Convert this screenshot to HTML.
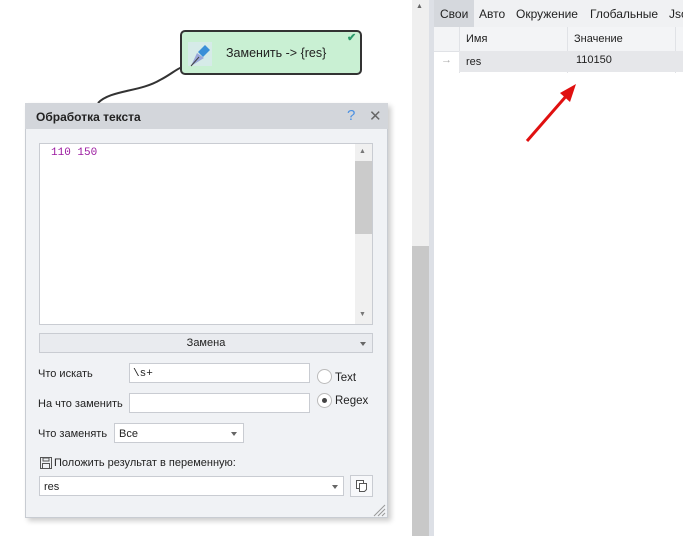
<html><head><style>
body{margin:0;width:683px;height:536px;background:#fff;position:relative;overflow:hidden;font-family:"Liberation Sans",sans-serif;font-size:11px;color:#222}
.a{position:absolute}
.inp{position:absolute;background:#fff;border:1px solid #c9ccd2;box-sizing:border-box}
.tri{position:absolute;width:0;height:0;border-left:3.5px solid transparent;border-right:3.5px solid transparent;border-top:4px solid #666}
.tab{position:absolute;top:7px;font-size:12px;white-space:nowrap}
</style></head><body>
<svg class="a" style="left:0;top:0" width="400" height="110"><path d="M98 103 C110 90,140 92,160 80 C170 75,175 70,182 67" stroke="#333" stroke-width="2" fill="none"/></svg>
<div class="a" style="left:180px;top:30px;width:182px;height:45px;background:#c9f0d3;border:2px solid #333;border-radius:5px;box-sizing:border-box"></div>
<svg class="a" style="left:186px;top:40px" width="30" height="30"><rect x="2" y="2" width="24" height="24" fill="#dfe8f7" opacity=".6"/><path d="M5 26 L11 13 L18 18 Z" fill="#9aa6d8"/><path d="M12 12 L19 5 L24 10 L17 17Z" fill="#3a8fd8"/><path d="M5 26 L13 17" stroke="#444" stroke-width="1"/></svg>
<div class="a" style="left:226px;top:46px;font-size:12.5px;color:#222">Заменить -&gt; {res}</div>
<div class="a" style="left:347px;top:31px;color:#2a9a6a;font-size:11px;font-weight:bold">✔</div>

<div class="a" style="left:25px;top:103px;width:363px;height:415px;background:#f0f2f5;border:1px solid #c8ccd2;box-sizing:border-box;box-shadow:3px 3px 5px rgba(0,0,0,.2)"></div>
<div class="a" style="left:25px;top:103px;width:363px;height:26px;background:#d3d6db"></div>
<div class="a" style="left:36px;top:110px;font-weight:bold;font-size:12px;color:#222">Обработка текста</div>
<div class="a" style="left:347px;top:107px;font-size:15px;color:#4a90e2">?</div>
<div class="a" style="left:369px;top:107px;font-size:15px;color:#666">✕</div>
<div class="inp" style="left:39px;top:143px;width:334px;height:182px"></div>
<div class="a" style="left:51px;top:147px;font-family:'Liberation Mono',monospace;font-size:11px;color:#9b1aa0">110 150</div>
<div class="a" style="left:355px;top:144px;width:17px;height:180px;background:#f0f0f0"></div>
<div class="a" style="left:355px;top:161px;width:17px;height:73px;background:#cbcbcb"></div>
<div class="a" style="left:359px;top:148px;font-size:7px;color:#777">▲</div>
<div class="a" style="left:359px;top:311px;font-size:7px;color:#777">▼</div>
<div class="a" style="left:39px;top:333px;width:334px;height:20px;background:#e9ebef;border:1px solid #c9ccd2;box-sizing:border-box;text-align:center;line-height:18px">Замена</div>
<div class="tri" style="left:360px;top:342px"></div>
<div class="a" style="left:38px;top:368px">Что искать</div>
<div class="inp" style="left:129px;top:363px;width:181px;height:20px"></div>
<div class="a" style="left:133px;top:368px;font-family:'Liberation Mono',monospace;font-size:11px">\s+</div>
<div class="a" style="left:38px;top:398px">На что заменить</div>
<div class="inp" style="left:129px;top:393px;width:181px;height:20px"></div>
<div class="a" style="left:317px;top:369px;width:15px;height:15px;border:1px solid #bbb;border-radius:50%;background:#fff;box-sizing:border-box"></div>
<div class="a" style="left:335px;top:372px;font-size:11.5px">Text</div>
<div class="a" style="left:317px;top:393px;width:15px;height:15px;border:1px solid #bbb;border-radius:50%;background:#fff;box-sizing:border-box"></div>
<div class="a" style="left:322px;top:398px;width:5px;height:5px;border-radius:50%;background:#444"></div>
<div class="a" style="left:335px;top:395px;font-size:11.5px">Regex</div>
<div class="a" style="left:38px;top:428px">Что заменять</div>
<div class="inp" style="left:114px;top:423px;width:130px;height:20px"></div>
<div class="a" style="left:119px;top:428px">Все</div>
<div class="tri" style="left:231px;top:432px"></div>
<svg class="a" style="left:40px;top:457px" width="12" height="12"><rect x=".5" y=".5" width="11" height="11" fill="none" stroke="#555"/><rect x="3" y="1" width="6" height="3" fill="none" stroke="#555"/><rect x="2.5" y="6.5" width="7" height="5" fill="none" stroke="#555"/></svg>
<div class="a" style="left:54px;top:457px">Положить результат в переменную:</div>
<div class="inp" style="left:39px;top:476px;width:305px;height:20px"></div>
<div class="a" style="left:44px;top:481px">res</div>
<div class="tri" style="left:332px;top:485px"></div>
<div class="inp" style="left:350px;top:475px;width:23px;height:22px;background:#f7f8fa"></div>
<svg class="a" style="left:355px;top:479px" width="14" height="14"><rect x="1.5" y="1.5" width="7" height="8" fill="#fff" stroke="#555"/><path d="M4.5 4.5h7v6l-2 2h-5z" fill="#fff" stroke="#555"/></svg>
<svg class="a" style="left:372px;top:503px" width="14" height="14"><path d="M2 13L13 2M6 13L13 6M10 13L13 10" stroke="#999"/></svg>

<div class="a" style="left:412px;top:0;width:17px;height:536px;background:#efefef"></div>
<div class="a" style="left:412px;top:246px;width:17px;height:290px;background:#c8c8c8"></div>
<div class="a" style="left:416px;top:3px;font-size:7px;color:#666">▲</div>
<div class="a" style="left:429px;top:0;width:5px;height:536px;background:#dde0e6"></div>
<div class="a" style="left:434px;top:0;width:249px;height:27px;background:#f0f1f3"></div>
<div class="a" style="left:434px;top:0;width:40px;height:27px;background:#d5d8dd"></div>
<div class="tab" style="left:440px">Свои</div>
<div class="tab" style="left:479px">Авто</div>
<div class="tab" style="left:516px">Окружение</div>
<div class="tab" style="left:590px">Глобальные</div>
<div class="tab" style="left:669px">Json</div>
<div class="a" style="left:434px;top:27px;width:249px;height:24px;background:#f3f4f6;border-bottom:1px solid #e0e2e6"></div>
<div class="a" style="left:459px;top:27px;width:1px;height:46px;background:#e0e2e6"></div>
<div class="a" style="left:567px;top:27px;width:1px;height:46px;background:#e0e2e6"></div>
<div class="a" style="left:675px;top:27px;width:1px;height:46px;background:#e0e2e6"></div>
<div class="a" style="left:466px;top:33px">Имя</div>
<div class="a" style="left:574px;top:33px">Значение</div>
<div class="a" style="left:459px;top:51px;width:224px;height:21px;background:#e6e7ea"></div>
<div class="a" style="left:441px;top:54px;color:#aaa">→</div>
<div class="a" style="left:466px;top:56px">res</div>
<div class="a" style="left:576px;top:54px">110150</div>
<svg class="a" style="left:520px;top:78px" width="60" height="70"><path d="M7 63 L48 16" stroke="#e01010" stroke-width="3"/><path d="M56 6 L40 15 L50 24Z" fill="#e01010"/></svg>
</body></html>
